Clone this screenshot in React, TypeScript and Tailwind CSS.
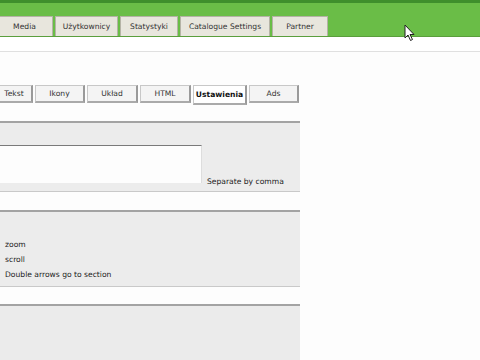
const topTabs = [
  { label: "Media", w: "w-[57px]" },
  { label: "Użytkownicy", w: "w-[63px]" },
  { label: "Statystyki", w: "w-[58px]" },
  { label: "Catalogue Settings", w: "w-[90px]" },
  { label: "Partner", w: "w-[56px]" },
];

const subTabs = [
  { label: "Tekst", w: "w-[37px]" },
  { label: "Ikony", w: "w-[50px]" },
  { label: "Układ", w: "w-[51px]" },
  { label: "HTML", w: "w-[51px]" },
  { label: "Ustawienia", w: "w-[54px]", active: true },
  { label: "Ads", w: "w-[50px]" },
];

function Cursor() {
  return (
    <svg width="12" height="18" viewBox="0 0 12 18" className="absolute left-[404px] top-[24px]">
      <path d="M1 1 L1 14 L4 11 L6.5 16.5 L8.5 15.5 L6 10.5 L10 10.5 Z" fill="#fff" stroke="#222" strokeWidth="1" strokeLinejoin="round" />
    </svg>
  );
}

export default function App() {
  return (
    <div className="relative h-[360px] w-[480px] overflow-hidden bg-[#fdfdfd] font-['DejaVu_Sans',sans-serif] text-[7.6px] text-[#222]">
      <div className="h-[3px] bg-[#3f8f2c]" />
      <div className="flex h-[34px] items-end bg-[#6abd47] border-b border-[#5a9e3c]">
        <div className="-ml-[4px] flex gap-[2px]">
          {topTabs.map((t) => (
            <div
              key={t.label}
              className={`${t.w} flex h-[20px] items-center justify-center pt-[1px] border border-b-0 border-[#b5b3a6] bg-[#e8e6dd] text-[#333]`}
            >
              {t.label}
            </div>
          ))}
        </div>
      </div>
      <div className="h-[15px] bg-white border-b border-[#e0e0e0]" />

      <div className="mt-[33px] flex gap-[2px] -ml-[4px] items-start">
        {subTabs.map((t) => (
          <div
            key={t.label}
            className={`${t.w} flex items-center justify-center border border-t-[#c8c8c8] border-l-[#c8c8c8] border-r-2 border-r-[#9a9a9a] border-b-2 border-b-[#aaa] ${
              t.active ? "h-[20px] bg-white font-bold text-[#111] border-b-0" : "h-[18px] bg-[#f4f4f4] text-[#333]"
            }`}
          >
            {t.label}
          </div>
        ))}
      </div>

      <div className="mt-[16px] w-[300px] border-t-2 border-[#a3a3a3] border-b border-b-[#c9c9c9] bg-[#ececec]">
        <div className="flex h-[68px] items-end pb-[8px]">
          <div className="h-[38px] w-[202px] border-t border-t-[#7a7a7a] border-r border-r-[#ddd] bg-[#fdfdfd]" />
          <div className="ml-[5px] mb-[-4px]">Separate by comma</div>
        </div>
      </div>

      <div className="mt-[18px] w-[300px] border-t-2 border-[#a3a3a3] border-b border-b-[#c9c9c9] bg-[#ececec]">
        <div className="flex h-[74px] flex-col pl-[5px] pt-[28px] gap-[5px] leading-[10px]">
          <div>zoom</div>
          <div>scroll</div>
          <div>Double arrows go to section</div>
        </div>
      </div>

      <div className="mt-[17px] h-[60px] w-[300px] border-t-2 border-[#a3a3a3] bg-[#ebebeb]" />

      <Cursor />
    </div>
  );
}
